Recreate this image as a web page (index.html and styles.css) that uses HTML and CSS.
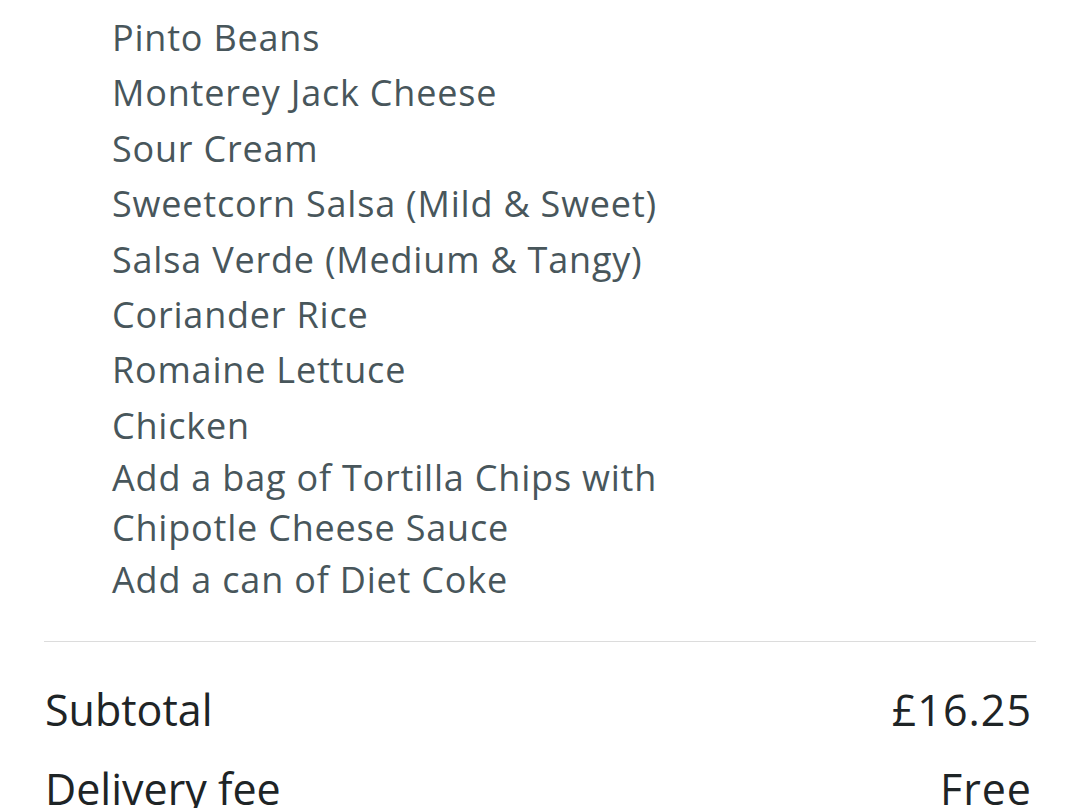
FILE: index.html
```html
<!DOCTYPE html>
<html lang="en">
<head>
<meta charset="utf-8">
<title>Order summary</title>
<link rel="stylesheet" href="styles.css">
</head>
<body>
<main class="page">
  <ul class="options">
    <li>Pinto Beans</li>
    <li>Monterey Jack Cheese</li>
    <li>Sour Cream</li>
    <li>Sweetcorn Salsa (Mild &amp; Sweet)</li>
    <li>Salsa Verde (Medium &amp; Tangy)</li>
    <li>Coriander Rice</li>
    <li>Romaine Lettuce</li>
    <li>Chicken</li>
    <li class="extra">Add a bag of Tortilla Chips with Chipotle Cheese Sauce</li>
    <li class="extra">Add a can of Diet Coke</li>
  </ul>
  <hr class="divider">
  <section class="totals">
    <div class="row"><span>Subtotal</span><span class="amount">£16.25</span></div>
    <div class="row"><span>Delivery fee</span><span class="amount">Free</span></div>
  </section>
</main>
</body>
</html>
```

FILE: styles.css
```css
html, body {
  margin: 0;
  padding: 0;
  background: #ffffff;
}
body {
  font-family: "Open Sans", "Noto Sans", sans-serif;
  width: 1080px;
  height: 808px;
  overflow: hidden;
}
.page {
  padding: 13px 44px 0 44px;
}
.options {
  list-style: none;
  margin: 0;
  padding: 0 0 0 68px;
  width: 600px;
}
.options li {
  font-size: 36px;
  letter-spacing: 0.8px;
  line-height: 50px;
  color: #48565b;
}
.options li + li {
  margin-top: 5.4px;
}
.options li.extra {
  margin-top: 2px;
}
.divider {
  border: 0;
  border-top: 1.5px solid #dcdcdc;
  margin: 36px 0 0 0;
}
.totals {
  padding: 0 4px 0 1px;
  display: flex;
  flex-direction: column;
}
.row {
  display: flex;
  justify-content: space-between;
  font-size: 43px;
  line-height: 79px;
  color: #1e2426;
}
.row:first-child {
  margin-top: 28px;
}
.amount {
  letter-spacing: 1px;
}
```
